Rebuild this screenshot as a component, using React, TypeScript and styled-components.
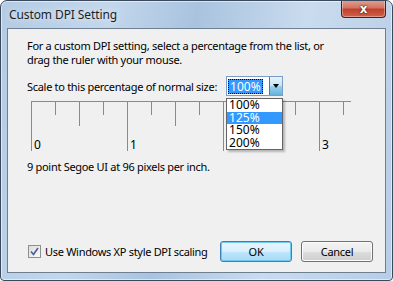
import styled, { createGlobalStyle } from 'styled-components';

const GlobalStyle = createGlobalStyle`
  html, body {
    margin: 0;
    padding: 0;
    background: #ffffff;
  }
  body {
    font-family: 'Segoe UI', 'Noto Sans', 'Liberation Sans', sans-serif;
    font-size: 11px;
    letter-spacing: -0.3px;
    color: #000;
  }
`;

const Window = styled.div`
  width: 393px;
  height: 281px;
  box-sizing: border-box;
  border: 1px solid #3a4a5c;
  border-radius: 7px 7px 4px 4px;
  background: linear-gradient(
    100deg,
    #b3cbe4 0%,
    #c3d7ec 25%,
    #a9c3df 45%,
    #c9dbee 70%,
    #b6cde6 100%
  );
  box-shadow: inset 0 0 0 1px rgba(255, 255, 255, 0.55);
  display: flex;
  flex-direction: column;
  padding: 0 6px 7px 6px;
  overflow: hidden;
`;

const TitleBar = styled.div`
  height: 27px;
  display: flex;
  align-items: flex-start;
  justify-content: space-between;
`;

const Title = styled.span`
  margin: 5px 0 0 2px;
  font-size: 12px;
  letter-spacing: -0.1px;
  color: #1e1e1e;
  text-shadow: 0 0 6px rgba(255, 255, 255, 0.9);
`;

const CloseButton = styled.div`
  width: 45px;
  height: 18px;
  margin-top: -1px;
  box-sizing: border-box;
  border: 1px solid #5a1a12;
  border-top: none;
  border-radius: 0 0 4px 4px;
  background: linear-gradient(#dfa395 0%, #d27462 45%, #c0402b 55%, #d0614a 100%);
  box-shadow: inset 0 0 0 1px rgba(255, 255, 255, 0.35);
  display: flex;
  align-items: center;
  justify-content: center;
  color: #fff;
  font: bold 12px 'DejaVu Sans', sans-serif;
  text-shadow: 0 0 2px #4a0c05, 0 0 1px #4a0c05;
`;

const Panel = styled.div`
  flex: 1;
  position: relative;
  border: 1px solid #6e7f92;
  background: #f0f0f0;
  display: flex;
  flex-direction: column;
  padding: 10px 12px 10px 19px;
`;

const Paragraph = styled.p`
  margin: 0;
  line-height: 14px;
`;

const ScaleRow = styled.div`
  display: flex;
  align-items: center;
  margin-top: 9px;
  height: 20px;
`;

const ComboWrap = styled.div`
  position: relative;
  margin-left: 9px;
`;

const Combo = styled.div`
  display: flex;
  width: 57px;
  height: 20px;
  box-sizing: border-box;
  border: 1px solid #7a9cc6;
  background: #fff;
`;

const ComboValue = styled.div`
  flex: 1;
  display: flex;
  align-items: center;
  padding-left: 1px;
  font-size: 12px;
  letter-spacing: 0;
`;

const SelectedText = styled.span`
  background: #3399ff;
  color: #fff;
  padding: 0 2px;
  line-height: 15px;
  outline: 1px dotted #000;
  outline-offset: -1px;
`;

const ComboArrow = styled.div`
  width: 12px;
  border-left: 1px solid #3c7fb1;
  background: linear-gradient(#e5f4fc 0%, #c4e5f6 50%, #98d1ef 51%, #68b3db 100%);
  display: flex;
  align-items: center;
  justify-content: center;
  &::after {
    content: '';
    border-left: 3.5px solid transparent;
    border-right: 3.5px solid transparent;
    border-top: 4px solid #000;
  }
`;

const DropList = styled.ul`
  position: absolute;
  top: 22px;
  left: 0;
  width: 57px;
  box-sizing: border-box;
  margin: 0;
  padding: 0;
  list-style: none;
  background: #fff;
  border: 1px solid #646464;
  box-shadow: 2px 2px 2px rgba(0, 0, 0, 0.25);
  z-index: 2;
  font-size: 12px;
  letter-spacing: 0;
`;

const DropItem = styled.li<{ $active?: boolean }>`
  height: 12.5px;
  line-height: 12.5px;
  padding-left: 2px;
  background: ${(p) => (p.$active ? '#3399ff' : 'transparent')};
  color: ${(p) => (p.$active ? '#fff' : '#000')};
`;

const RulerBox = styled.div`
  margin-top: 5px;
  margin-left: 4px;
  height: 53px;
`;

const Info = styled.div`
  margin-top: 6px;
  line-height: 14px;
`;

const Footer = styled.div`
  margin-top: auto;
  display: flex;
  align-items: center;
`;

const CheckLabel = styled.label`
  display: flex;
  align-items: center;
  gap: 4px;
  margin-left: 1px;
  flex: 1;
  white-space: nowrap;
`;

const CheckBox = styled.span`
  width: 13px;
  height: 13px;
  box-sizing: border-box;
  border: 1px solid #8e8f8f;
  background: linear-gradient(135deg, #dcdcdc, #fbfbfb);
  display: flex;
  align-items: center;
  justify-content: center;
`;

const Button = styled.div<{ $default?: boolean }>`
  width: 72px;
  height: 21px;
  box-sizing: border-box;
  border: 1px solid ${(p) => (p.$default ? '#3c7fb1' : '#707070')};
  border-radius: 3px;
  background: ${(p) =>
    p.$default
      ? 'linear-gradient(#e8f5fc 0%, #d9f0fc 50%, #bee6fd 51%, #a7d9f5 100%)'
      : 'linear-gradient(#f2f2f2 0%, #ebebeb 50%, #dddddd 51%, #cfcfcf 100%)'};
  box-shadow: inset 0 0 0 1px ${(p) => (p.$default ? '#6fcaf0' : '#fcfcfc')};
  display: flex;
  align-items: center;
  justify-content: center;
  & + & {
    margin-left: 9px;
  }
`;

const Ruler = () => {
  const ticks = [];
  for (let i = 0; i <= 13; i++) {
    const x = i * 24 + 0.5;
    const len = i % 4 === 0 ? 50 : i % 2 === 0 ? 25 : 14;
    ticks.push(<line key={i} x1={x} y1={0} x2={x} y2={len} stroke="#8a8a8a" strokeWidth={1} />);
  }
  return (
    <svg width={322} height={53}>
      <line x1={0} y1={0.5} x2={320} y2={0.5} stroke="#8a8a8a" strokeWidth={1} />
      {ticks}
      {[0, 1, 2, 3].map((n) => (
        <text key={n} x={n * 96 + 3} y={48} fontSize={12} fill="#000" fontFamily="'Segoe UI', 'Noto Sans', sans-serif">
          {n}
        </text>
      ))}
    </svg>
  );
};

export default function App() {
  return (
    <>
      <GlobalStyle />
      <Window>
        <TitleBar>
          <Title>Custom DPI Setting</Title>
          <CloseButton>x</CloseButton>
        </TitleBar>
        <Panel>
          <Paragraph>
            For a custom DPI setting, select a percentage from the list, or
            <br />
            drag the ruler with your mouse.
          </Paragraph>
          <ScaleRow>
            <span>Scale to this percentage of normal size:</span>
            <ComboWrap>
              <Combo>
                <ComboValue>
                  <SelectedText>100%</SelectedText>
                </ComboValue>
                <ComboArrow />
              </Combo>
              <DropList>
                <DropItem>100%</DropItem>
                <DropItem $active>125%</DropItem>
                <DropItem>150%</DropItem>
                <DropItem>200%</DropItem>
              </DropList>
            </ComboWrap>
          </ScaleRow>
          <RulerBox>
            <Ruler />
          </RulerBox>
          <Info>9 point Segoe UI at 96 pixels per inch.</Info>
          <Footer>
            <CheckLabel>
              <CheckBox>
                <svg width={9} height={9} viewBox="0 0 9 9">
                  <path d="M1 4.5 L3.5 7.5 L8 1" fill="none" stroke="#4a5f97" strokeWidth={1.6} />
                </svg>
              </CheckBox>
              Use Windows XP style DPI scaling
            </CheckLabel>
            <Button $default>OK</Button>
            <Button>Cancel</Button>
          </Footer>
        </Panel>
      </Window>
    </>
  );
}
